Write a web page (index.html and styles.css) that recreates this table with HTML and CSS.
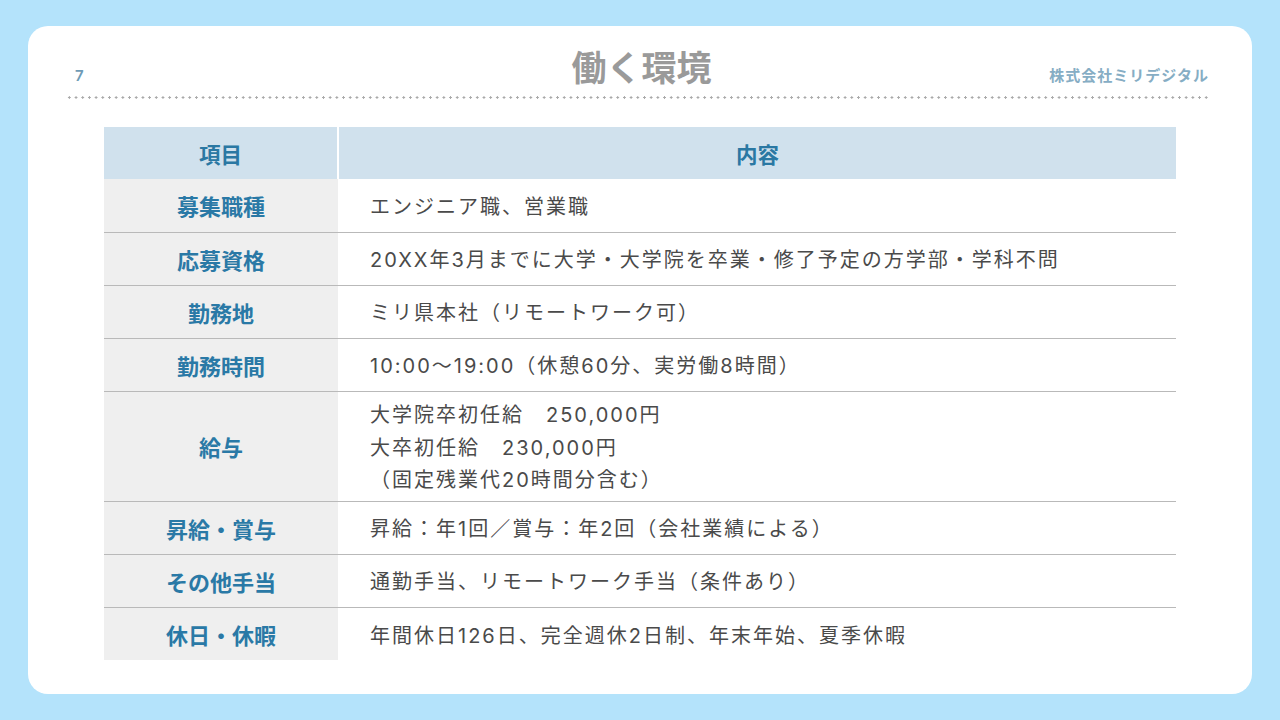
FILE: index.html
```html
<!DOCTYPE html>
<html lang="ja">
<head>
<meta charset="utf-8">
<link rel="stylesheet" href="styles.css">
</head>
<body>
<div class="card">
  <header class="top">
    <span class="pageno">7</span>
    <h1 class="title">働く環境</h1>
    <span class="company">株式会社ミリデジタル</span>
  </header>
  <div class="dots"></div>
  <table class="info">
    <thead>
      <tr><th class="c1">項目</th><th class="c2">内容</th></tr>
    </thead>
    <tbody>
      <tr><th>募集職種</th><td>エンジニア職、営業職</td></tr>
      <tr><th>応募資格</th><td>20XX年3月までに大学・大学院を卒業・修了予定の方学部・学科不問</td></tr>
      <tr><th>勤務地</th><td>ミリ県本社（リモートワーク可）</td></tr>
      <tr><th>勤務時間</th><td>10:00～19:00（休憩60分、実労働8時間）</td></tr>
      <tr class="tall"><th>給与</th><td>大学院卒初任給　250,000円<br>大卒初任給　230,000円<br>（固定残業代20時間分含む）</td></tr>
      <tr><th>昇給・賞与</th><td>昇給：年1回／賞与：年2回（会社業績による）</td></tr>
      <tr><th>その他手当</th><td>通勤手当、リモートワーク手当（条件あり）</td></tr>
      <tr><th>休日・休暇</th><td>年間休日126日、完全週休2日制、年末年始、夏季休暇</td></tr>
    </tbody>
  </table>
</div>
</body>
</html>
```

FILE: styles.css
```css
html, body {
  margin: 0;
  padding: 0;
}
body {
  background: #b4e3fb;
  font-family: "Inter", "Noto Sans CJK JP", sans-serif;
  width: 1280px;
  height: 720px;
  overflow: hidden;
  padding-top: 26px;
  box-sizing: border-box;
}
.card {
  margin: 0 28px;
  height: 668px;
  background: #ffffff;
  border-radius: 20px;
  box-sizing: border-box;
  padding: 0 42px 0 38px;
}
.top {
  display: grid;
  grid-template-columns: 1fr auto 1fr;
  align-items: baseline;
  height: 68px;
  padding: 0 2px 0 9px;
  box-sizing: border-box;
  padding-top: 19px;
}
.pageno {
  font-size: 15px;
  font-weight: 600;
  color: #6f9bb6;
  font-family: "Inter", "Noto Sans", sans-serif;
}
.title {
  margin: 0;
  font-family: "Noto Sans CJK JP", sans-serif;
  font-size: 35px;
  font-weight: 700;
  color: #9a9a9a;
  line-height: 1.2;
}
.company {
  justify-self: end;
  font-family: "Noto Sans CJK JP", sans-serif;
  font-size: 15px;
  font-weight: 700;
  color: #86adc4;
  letter-spacing: 1px;
  margin-right: -1px;
}
.dots {
  height: 3px;
  margin-top: 2px;
  background-image: radial-gradient(circle, #a9a9a9 1px, transparent 1.3px);
  background-size: 6.7px 3px;
  background-position: 0 0;
}
.info {
  margin: 28px 0 0 38px;
  width: 1072px;
  border-collapse: collapse;
  font-size: 20px;
  letter-spacing: 2px;
}
.info thead th {
  background: #d0e1ed;
  color: #2a78a3;
  font-family: "Noto Sans CJK JP", sans-serif;
  font-weight: 700;
  font-size: 21.5px;
  letter-spacing: 0;
  height: 52px;
  padding: 0;
}
.info thead th.c1 {
  width: 233px;
  border-right: 2px solid #ffffff;
}
.info tbody tr {
  border-bottom: 1px solid #b9b9b9;
  height: 53px;
}
.info tbody tr:last-child {
  border-bottom: none;
}
.info tbody tr.tall {
  height: 110px;
}
.info tbody th {
  background: #efefef;
  color: #2a79a6;
  font-family: "Noto Sans CJK JP", sans-serif;
  font-weight: 700;
  font-size: 22px;
  letter-spacing: 0;
  padding: 0;
}
.info tbody td {
  color: #4a4a4a;
  padding: 4px 0 0 32px;
  line-height: 32.5px;
}
```
